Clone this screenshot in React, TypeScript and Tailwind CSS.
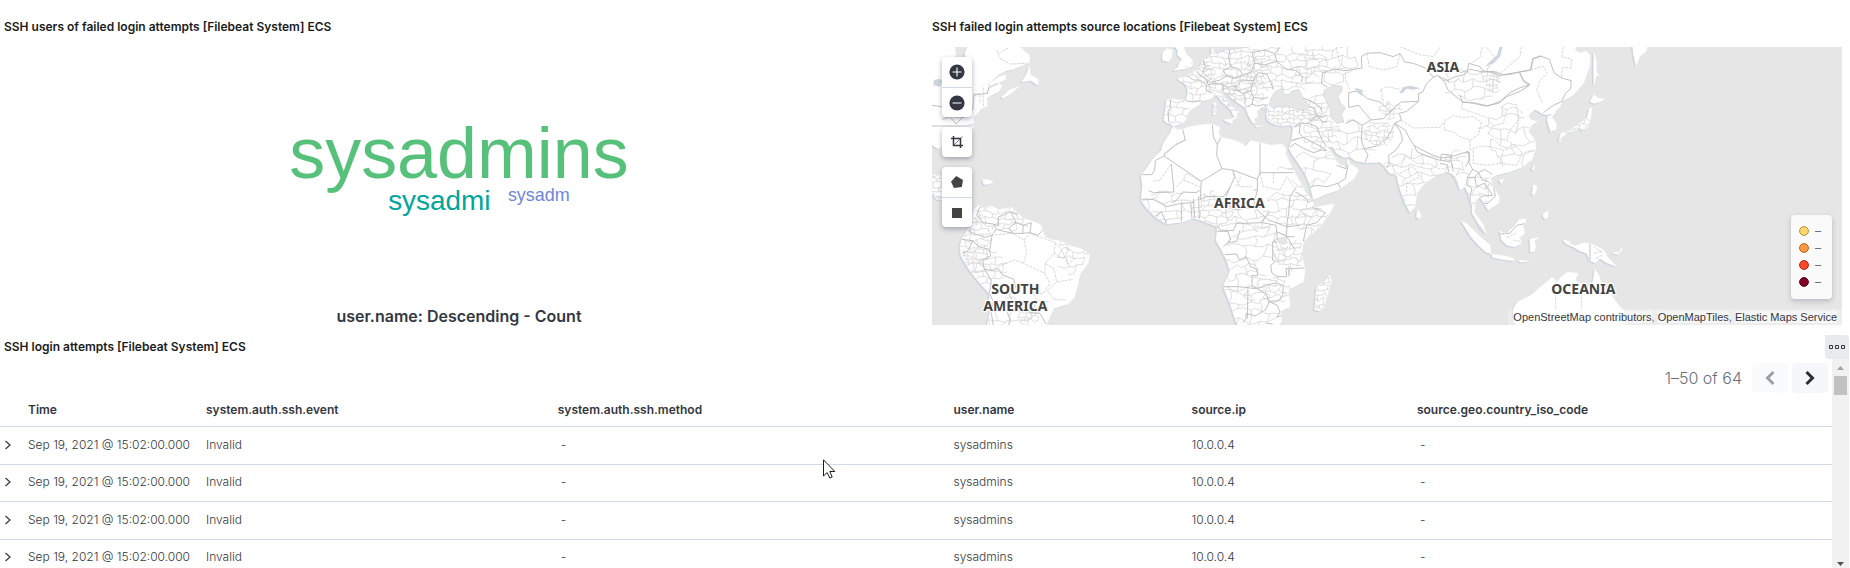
import React from "react";

const rows = [0, 1, 2, 3].map((id) => ({
  id,
  time: "Sep 19, 2021 @ 15:02:00.000",
  event: "Invalid",
  user: "sysadmins",
  ip: "10.0.0.4",
}));

const legend = [
  { fill: "#fed76e", stroke: "#b29231" },
  { fill: "#fd9a42", stroke: "#b0611a" },
  { fill: "#fb4b29", stroke: "#b51a10" },
  { fill: "#800026", stroke: "#4d0014" },
];

/* ---------- map geometry ---------- */

type Shape = { t: string; d: string };

const AMERICAS = "translate(-6 -141)";
const EUROPE = "translate(624 -21)";
const ASIA = "translate(924 -21)";
const PACIFIC = "translate(1584 -21)";
const SOUTH_AFRICA = "translate(624 399)";

const land: Shape[] = [
  // North and Central America
  { t: AMERICAS, d: "M6 141H74L77 165L66 180L100 215L108 171L104 160L112 141H270L286 156L298 166V186L280 196L250 207L225 213L205 224L190 237L176 252L205 232L226 225L228 236L205 250L216 258L206 275L192 281L170 295L172 318L153 328L130 352L130 370L101 375L129 380L128 384L60 392L38 405L34 440L24 446L6 434Z" },
  { t: AMERICAS, d: "M298 201L290 222L275 246L302 241L322 254L326 240L311 230L301 225Z" },
  { t: AMERICAS, d: "M214 292L238 270L266 260L258 268L238 284L219 294Z" },
  { t: AMERICAS, d: "M6 525L40 529V600L20 598L6 580Z" },
  { t: AMERICAS, d: "M158 540L176 539L189 547L178 552L162 553Z" },
  // South America
  { t: AMERICAS, d: "M125 665L130 630L147 616L160 624L183 618L206 629L246 623L262 640L281 656L304 663L331 674L345 712L366 720L390 723L425 738L456 748L478 764L474 790L450 822L441 862L432 893L414 911L371 926L356 958L348 976H172L182 930L178 880L152 852L122 815L94 770L90 744L96 715L112 688Z" },
  // Europe islands
  { t: AMERICAS, d: "M735 141L744 150L743 165L757 178L748 188L744 202L732 212L752 208L770 206L786 198L788 184L780 172L770 165L760 141Z" },
  { t: AMERICAS, d: "M698 158L711 146L727 151L725 171L715 184L698 182Z" },
  { t: EUROPE, d: "M221 190L228 188L227 202L222 204ZM219 207L228 207L227 222L220 224ZM252 240L278 237L276 250L263 248ZM348 258L366 259L350 262Z" },
  // Eurasia
  { t: EUROPE, d: "M214 18L214 44L202 56L188 60L180 79L166 90L153 102L142 104L144 111L132 112L115 115L118 122L132 127L143 145L143 165L137 182L100 178L80 180L77 200L72 240L79 248L90 250L100 258L128 250L138 238L139 225L152 210L180 192L180 183L200 180L215 174L228 165L239 174L245 185L258 195L275 212L282 230L272 243L290 234L289 222L297 215L275 200L258 180L248 167L250 155L262 158L275 175L300 192L318 205L325 225L338 248L345 250L343 235L352 232L350 212L365 205L383 208L380 222L382 240L400 252L430 258L455 255L460 265L455 300L447 325L455 340L475 370L495 400L510 435L520 480L550 466L595 450L640 418L656 390L630 370L624 360L620 375L605 378L590 365L575 340L562 320L578 320L590 340L610 352L630 350L645 362L680 368L720 366L732 378L750 400L770 405L778 440L795 490L810 517L825 500L830 460L850 435L890 405L920 395L935 400L950 420L960 450L975 440L985 460L997 500L997 520L1012 545L1022 565L1038 580L1030 555L1012 530L1002 515L1008 480L1020 472L1032 490L1045 510L1075 490L1078 470L1055 435L1052 415L1070 405L1110 395L1150 380L1175 360L1187 325L1185 300L1165 275L1175 255L1192 245L1170 240L1165 225L1185 208L1198 215L1210 222L1225 225L1222 240L1232 275L1248 268L1248 250L1235 232L1250 210L1260 200L1265 185L1300 165L1330 130L1348 80L1350 45L1338 34L1320 40L1304 31L1310 18Z" },
  // Africa
  { t: EUROPE, d: "M100 258L90 280L70 310L62 335L40 355L20 385L3 405L8 440L3 480L20 505L50 535L82 552L130 545L160 535L180 540L200 548L230 558L232 570L228 600L245 630L262 665L270 695L258 720L250 740L270 790L290 850L300 862H415L425 840L420 815L450 800L447 775L445 750L490 725L495 690L485 640L490 605L540 560L570 520L582 492L550 497L522 503L516 480L495 455L480 425L462 395L450 370L428 325L434 340L440 328L427 313L395 316L360 308L330 302L318 319L300 308L280 300L242 292L235 280L240 262L215 252L180 255L145 262L128 268L110 270Z" },
  { t: SOUTH_AFRICA, d: "M569 285L574 304L562 345L550 382L540 392L524 389L526 360L530 320L550 308Z" },
  { t: ASIA, d: "M532 509L543 524L538 537L530 531Z" },
  // Pacific and South-East Asia
  { t: PACIFIC, d: "M402 40L408 60L410 98L416 106L407 110L402 135L401 80ZM402 164L414 175L434 177L420 186L402 190L390 184ZM395 204L391 238L382 262L366 272L360 262L344 272L324 278L305 292L300 306L296 294L305 278L330 270L352 256L368 244L382 232L388 206ZM518 18H562L558 34L540 48L528 76L522 50Z" },
  { t: PACIFIC, d: "M4 543L22 553L58 588L76 604L90 615L92 640L78 636L52 612L32 588ZM95 643L128 647L160 655L160 662L128 658L98 652ZM175 661L205 664L182 666ZM120 573L137 582L160 562L176 540L196 536L198 546L188 556L194 580L180 592L182 612L164 620L140 615L125 600Z" },
  { t: PACIFIC, d: "M210 598L236 593L222 604L227 620L222 634L212 636ZM310 600L330 605L328 612L346 618L375 608L400 614L430 630L445 655L468 678L440 668L420 655L405 668L390 662L380 640L355 630L340 620L316 610ZM220 436L228 436L230 448L222 466L216 462ZM250 521L264 514L263 532L255 537L248 528ZM216 388L223 374L221 390ZM118 420L131 418L124 431ZM458 640L476 636L484 624L484 632L474 642Z" },
  { t: PACIFIC, d: "M166 860L160 806L172 786L210 768L240 742L276 712L290 726L304 710L322 697L354 700L345 722L372 738L396 742L405 688L418 710L424 732L442 747L472 792L495 815V860Z" },
];

const water: Shape[] = [
  { t: EUROPE, d: "M388 196L392 176L405 155L428 144L432 162L452 164L453 154L476 148L490 176L507 196L503 208L476 210L450 201L420 198L400 204Z" },
  { t: EUROPE, d: "M552 152L578 136L606 138L606 154L594 168L602 190L617 204L604 222L612 246L590 250L574 235L570 208L560 185L550 168Z" },
  { t: EUROPE, d: "M219 20L226 36L242 37L252 30L292 27L325 20ZM363 206L377 198L383 206L370 210Z" },
  { t: SOUTH_AFRICA, d: "M411 176L441 170L437 192L418 190Z" },
];

const lakes: Shape[] = [
  { t: PACIFIC, d: "M128 21L120 50L100 70L75 80L92 62L112 44L118 21Z" },
  { t: ASIA, d: "M478 158L490 141L512 137L541 145L520 149L500 146L488 160Z" },
  { t: ASIA, d: "M345 143L368 150L366 168L350 156Z" },
  { t: SOUTH_AFRICA, d: "M399 205L408 232L420 252L412 246L401 225ZM444 254L450 268L449 293L444 286Z" },
  { t: AMERICAS, d: "M12 240L30 236L36 244L30 260L10 256Z" },
];

const borders: Shape[] = [
  { t: AMERICAS, d: "M6 378H128M37 358L60 350L102 352L128 330L132 285L172 280L178 262L204 250M6 316L36 320M60 350L78 372L100 350" },
  { t: AMERICAS, d: "M150 620L140 645L160 668L190 672L200 688L186 706L166 712L130 700L112 690M190 672L206 678L204 652L240 636L262 644M244 640L258 668L236 684L250 700L204 690M258 668L280 676L278 700L250 700M280 676L304 668L300 698L278 700M300 698L324 706L338 690M96 718L128 722L146 740L178 748L182 768L158 780L162 806L186 812L206 806L216 824L252 838L256 862L238 886L252 908L284 916L300 938L330 940L348 972M178 880L190 904L184 940L190 975M252 908L230 930L240 960L236 975M162 806L184 840L178 880M128 722L114 752L98 760M186 706L180 748" },
  { t: EUROPE, d: "M137 182L160 186L180 182M92 180L90 205L84 215L86 245M143 108L160 120L180 120M180 120L200 135L198 150L215 160M166 92L178 104L200 118L204 134M190 60L196 80L188 96L204 112M270 22L266 50L272 80L250 92L260 108L240 120L212 128M272 80L296 86L308 104L284 114L260 108M308 104L332 98L344 70L336 38M204 134L230 130L248 134L262 142L288 138L308 120L340 122L354 98L380 102L392 126L400 150M248 134L250 155M288 138L292 152L310 160L318 180L312 190M310 160L332 152L340 122M332 152L340 172L370 176L384 172M340 172L336 192L324 200M336 192L352 198L370 194L384 196M280 150L302 152M344 70L376 74L410 64L440 88L470 92L488 110L484 128M410 64L404 40L420 22M336 38L372 30L404 40" },
  { t: EUROPE, d: "M462 262L480 250L504 250L530 226L524 206L506 200M480 250L478 280L490 292L458 300M490 292L520 308L548 322L560 332M504 250L530 260L546 300L560 320M530 226L548 232L560 226M478 170L506 180L540 200L546 216M530 226L548 246L560 244M452 304L470 296M450 322L465 310L490 325L520 338L545 330L560 332M512 440L530 436L560 440L594 430L616 416L624 378M594 430L602 446M590 376L618 386L620 362" },
  { t: ASIA, d: "M248 98L284 88L320 92L366 84L364 50L380 40L420 38L460 50L480 40L494 66L520 70L556 84L580 112L560 130L548 156L536 160L536 184L500 214L478 220L484 240L464 250M248 98L244 130L262 142M326 202V158L354 152L382 176L420 186L450 214L484 186L534 184M326 202L356 196L378 222L392 240M316 250L340 240L366 256L392 240L430 236L460 208M366 256L364 300L372 326L384 344L376 366M372 326L410 318L440 296L456 268L464 250L496 270L510 298L522 316L546 330L580 346L604 354L634 350M464 250L480 272L488 300L468 330L446 346L448 372L440 384M522 316L532 336L570 352L604 362M604 342L636 346L630 366L602 360ZM634 350L660 342L684 334L690 360L676 380M600 370L622 374L626 396M634 366L640 394M580 112L592 106L614 126L624 150L668 186L700 190L736 198L776 190L800 170L840 154L868 136L850 124L838 96L790 104L760 94L730 96L690 88L672 104L640 112L624 122L594 108M838 96L872 90L880 56L906 48" },
  { t: PACIFIC, d: "M0 98L22 92L26 70L60 80L68 92L100 98L120 106L158 102L178 96L190 120L210 134L178 144L150 158L120 184L84 198L40 188L8 186L0 166M178 96L212 90L218 56L240 48L268 58L282 98L304 114L334 122L332 146L316 160L306 184L280 196L250 218M258 228L272 224M16 340L28 336L26 366L38 388L22 412L20 432L36 446L30 470L34 510M38 388L56 398L74 388L98 404M22 412L44 412L56 398L66 420L84 424L100 440L106 468L84 490L64 492M44 412L50 440L72 430L92 456L98 466L66 468L58 480M120 582L150 580L170 556L198 550M390 612V664M48 545L60 560L72 576" },
  { t: EUROPE, d: "M128 268L136 300L110 312L74 340L72 348L184 424L246 386L278 390L352 418V450H340M72 348L46 362L44 390L36 404H4M94 372L102 456L40 458L26 452M217 254L220 290L232 314L230 346L246 386M242 292L232 314M360 308V398M360 398H460M352 418L360 398M184 424L182 450L168 458L128 456L112 478L96 490M182 450L182 478L196 470L250 470L270 442L284 410L278 390M270 442L258 470L270 500L290 510L340 500L352 450M340 500L386 540L440 560L480 556M470 440L450 470L446 520L440 556M466 456L492 470L508 488M516 500L556 518L530 548L500 556L490 604M4 480L40 478L62 490L80 500L98 496L124 490L160 488M124 490V544M152 490L156 536M160 476L164 534M176 470L178 536M44 530L64 516L80 550" },
  { t: SOUTH_AFRICA, d: "M230 136L240 150L280 152L290 130L312 130L366 128L408 136L412 176L398 186L398 240L404 246L392 256L396 280L414 290L440 290L438 266L494 264M232 154H264L272 180L250 200M264 188L290 184L300 150M254 224L290 222L298 240L318 230L332 260L352 268V288L336 286V318L352 326L384 314L412 308L430 320L428 346L418 362L388 364L378 388L346 408L318 400V416L308 428M248 320L296 320L348 326M324 330L322 416M366 128L386 96M412 156L440 168L464 208M386 364L412 376L420 396L410 412L428 406M378 430L398 432M352 326L378 342L388 364M398 186H412M442 134L438 170L464 170" },
];

const faint: Shape[] = [
  { t: AMERICAS, d: "M200 150L210 175L240 192L290 190M205 160L236 144M130 283L150 281V310M160 262V320M178 250L172 282M182 706L246 700L282 720L290 760L280 790L252 780L182 810M282 720L300 700L350 718L376 728L372 760L346 790L344 820L280 790M372 760L400 776L420 740M376 728L396 752L414 792L440 772M346 790L372 806L380 846L430 838M380 846L352 872L372 898L410 900M344 820L360 850L340 880L316 880L300 860L256 862M300 860L320 902L360 906" },
  { t: EUROPE, d: "M136 300L100 320L74 346M182 424L140 400L130 420L180 440M94 372L60 420L40 424M280 400L300 440L340 440M360 398L370 440L420 450L440 410L460 440M400 398V430M302 410L290 440M110 440L130 420" },
  { t: ASIA, d: "M614 242L640 226L664 232L700 230L724 246L716 284L690 300L660 290L640 276L612 270ZM668 186L664 206L700 218L740 232L760 258L744 280M690 300V330L720 318L750 320L790 330M744 280L770 296L800 300L830 320M760 258L790 250L800 210L820 200L850 220M800 210L780 200M830 200L836 240L810 270L800 300M484 240L520 264L600 262L612 244M700 330V370L740 376L780 370L830 376L846 340L880 330M780 370L790 330L830 320L846 340M420 380L470 376L500 350L530 370L570 372L600 388M480 400L520 380L540 410L500 430L500 460M740 22L770 60L740 88M288 22L300 70L318 86L316 120L330 150M380 40L388 80L430 90L470 80L480 42M480 20L540 44L580 50L600 22M420 150L440 140L480 148M424 150L430 190" },
  { t: PACIFIC, d: "M66 21L60 52L34 70M184 21L180 50L120 100M310 21L305 50L336 58L332 84L308 82L304 112M212 90L250 78L262 100L240 122L230 150L248 190M364 758V810M287 725V810M140 592L168 580M160 600L180 604M400 620L430 640M402 640L428 632M408 655L426 646" },
];

/* Deterministic pseudo-random generator for the district mesh. */
function rng(seed: number) {
  let s = seed;
  return () => {
    s = (s * 1664525 + 1013904223) % 4294967296;
    return s / 4294967296;
  };
}

/* Jittered honeycomb covering an ellipse: district lines of one area. */
function mesh(cx: number, cy: number, rx: number, ry: number, step: number, seed: number) {
  const rand = rng(seed);
  const cols = Math.ceil((rx * 2) / step) + 2;
  const lines = Math.ceil((ry * 2) / step) + 2;
  const pts: { x: number; y: number }[][] = [];
  for (let r = 0; r < lines; r++) {
    pts.push([]);
    for (let c = 0; c < cols; c++) {
      pts[r].push({
        x: cx - rx + c * step + (rand() - 0.5) * step * 0.75,
        y: cy - ry + r * step + (rand() - 0.5) * step * 0.75,
      });
    }
  }
  const inside = (p: { x: number; y: number }) => ((p.x - cx) / rx) ** 2 + ((p.y - cy) / ry) ** 2 < 1;
  let d = "";
  const link = (a: { x: number; y: number }, b: { x: number; y: number }) => {
    if (!inside(a) || !inside(b)) return;
    const mx = (a.x + b.x) / 2 + (rand() - 0.5) * step * 0.5;
    const my = (a.y + b.y) / 2 + (rand() - 0.5) * step * 0.5;
    d += `M${a.x.toFixed(0)} ${a.y.toFixed(0)}L${mx.toFixed(0)} ${my.toFixed(0)}L${b.x.toFixed(0)} ${b.y.toFixed(0)}`;
  };
  for (let r = 0; r < lines; r++) {
    for (let c = 0; c < cols; c++) {
      if (c + 1 < cols) link(pts[r][c], pts[r][c + 1]);
      if (r + 1 < lines && (r + c) % 2 === 0) link(pts[r][c], pts[r + 1][c]);
    }
  }
  return d;
}

const districts = [
  // Europe
  mesh(800, 100, 60, 70, 18, 3),
  mesh(730, 190, 55, 45, 20, 5),
  mesh(900, 60, 120, 85, 19, 7),
  mesh(930, 130, 80, 60, 18, 11),
  mesh(1060, 60, 130, 80, 21, 13),
  mesh(1180, 50, 110, 70, 26, 17),
  mesh(880, 180, 50, 50, 16, 19),
  // Turkey, Caucasus, Middle East
  mesh(1070, 206, 80, 38, 12, 23),
  mesh(1150, 180, 50, 50, 17, 29),
  mesh(1165, 250, 60, 60, 16, 31),
  mesh(1250, 290, 90, 70, 30, 37),
  mesh(1130, 380, 100, 90, 40, 41),
  mesh(1340, 260, 50, 45, 13, 43),
  mesh(1375, 190, 40, 28, 13, 47),
  // South, East and South-East Asia
  mesh(1440, 390, 110, 90, 28, 53),
  mesh(1570, 360, 45, 50, 18, 59),
  mesh(1620, 110, 100, 60, 26, 61),
  mesh(1680, 100, 30, 35, 12, 67),
  mesh(1740, 270, 110, 100, 38, 71),
  mesh(1640, 430, 60, 60, 24, 73),
  mesh(1930, 250, 60, 60, 14, 79),
  // Africa
  mesh(700, 480, 100, 70, 26, 83),
  mesh(840, 490, 70, 60, 16, 89),
  mesh(940, 520, 80, 50, 22, 97),
  mesh(1080, 480, 90, 60, 22, 101),
  mesh(1150, 520, 60, 60, 22, 103),
  mesh(980, 610, 120, 80, 36, 107),
  mesh(1075, 625, 50, 50, 16, 109),
  mesh(940, 700, 90, 70, 32, 113),
  mesh(1030, 730, 50, 45, 16, 127),
  mesh(930, 790, 120, 80, 28, 131),
  mesh(1172, 740, 40, 80, 14, 137),
  // Americas
  mesh(210, 510, 100, 50, 18, 139),
  mesh(130, 590, 50, 100, 18, 149),
  mesh(150, 660, 80, 70, 20, 151),
  mesh(290, 800, 40, 40, 12, 157),
  mesh(230, 800, 90, 60, 26, 163),
  mesh(420, 620, 60, 80, 24, 167),
  mesh(20, 420, 40, 60, 12, 173),
].join("");

const shapes = (list: Shape[]) => list.map((s, i) => <path key={i} transform={s.t} d={s.d} />);

function WorldMap() {
  return (
    <svg
      viewBox="0 0 2730 834"
      preserveAspectRatio="xMinYMin slice"
      className="block h-full w-full bg-[#e6e6e6]"
      role="img"
      aria-label="World map"
    >
      <defs>
        <clipPath id="land">{shapes(land)}</clipPath>
      </defs>
      <g fill="#cdd5df" stroke="#cdd5df" strokeWidth="3" transform="translate(-4 3)">
        {shapes(land)}
      </g>
      <g fill="#ffffff" stroke="#ffffff" strokeWidth="2" strokeLinejoin="round">
        {shapes(land)}
      </g>
      <g fill="none" strokeLinejoin="round" clipPath="url(#land)">
        <path d={districts} stroke="#d2d2d2" strokeWidth="2.2" />
        <g stroke="#cecece" strokeWidth="2.4" strokeDasharray="9 3">
          {shapes(faint)}
        </g>
        <g stroke="#bcbcbc" strokeWidth="2.8">{shapes(borders)}</g>
      </g>
      <g fill="#e6e6e6" stroke="#cdd5df" strokeWidth="2">
        {shapes(water)}
      </g>
      <g fill="#cdd5df">{shapes(lakes)}</g>
      <g
        className="font-['Noto_Sans',sans-serif] text-[42px] font-bold"
        fill="#444444"
        stroke="#ffffff"
        strokeWidth="7"
        strokeLinejoin="round"
        paintOrder="stroke"
        textAnchor="middle"
      >
        <text x="250" y="741">SOUTH</text>
        <text x="250" y="791">AMERICA</text>
        <text x="922" y="483">AFRICA</text>
        <text x="1533" y="75">ASIA</text>
        <text x="1954" y="741">OCEANIA</text>
      </g>
    </svg>
  );
}

function MapControls() {
  const group = "flex flex-col overflow-hidden rounded bg-white shadow-[0_2px_5px_rgba(70,80,100,0.45)]";
  const button = "flex h-[30px] w-[30px] items-center justify-center";
  return (
    <div className="absolute left-[10px] top-[10px] flex flex-col gap-[10px]">
      <div className={group}>
        <button aria-label="Zoom in" className={button}>
          <svg width="16" height="16" viewBox="0 0 16 16">
            <circle cx="8" cy="8" r="7.6" fill="#343741" />
            <path d="M8 3.5v9M3.5 8h9" stroke="#fff" strokeWidth="1.1" />
          </svg>
        </button>
        <button aria-label="Zoom out" className={button + " border-t border-[#d3dae6]"}>
          <svg width="16" height="16" viewBox="0 0 16 16">
            <circle cx="8" cy="8" r="7.6" fill="#343741" />
            <path d="M3.5 8h9" stroke="#fff" strokeWidth="1.1" />
          </svg>
        </button>
      </div>
      <div className={group}>
        <button aria-label="Fit to data bounds" className={button}>
          <svg width="12" height="12" viewBox="0 0 12 12" fill="none" stroke="#343741">
            <path d="M2.500 0v9.500h9.500M0 2.500h9.500v9.500" strokeWidth="1.5" />
            <path d="M3.5 8.5l8-8" strokeWidth="0.6" />
          </svg>
        </button>
      </div>
      <div className={group}>
        <button aria-label="Draw polygon" className={button}>
          <svg width="12" height="12" viewBox="0 0 12 12" fill="#444">
            <path d="M5.200 0L12 4L10.800 11L3 12L0 5.800Z" />
          </svg>
        </button>
        <button aria-label="Draw rectangle" className={button + " border-t border-[#d3dae6]"}>
          <svg width="10" height="10">
            <rect width="10" height="10" fill="#444" />
          </svg>
        </button>
      </div>
    </div>
  );
}

function WordCloud() {
  return (
    <svg
      viewBox="0 0 920 255"
      className="block h-[255px] w-full font-['Liberation_Sans',Arial,sans-serif]"
      role="img"
      aria-label="user.name tag cloud"
    >
      <text x="290" y="131" fontSize="72" fill="#57c17b">sysadmins</text>
      <text x="389" y="163" fontSize="28" fill="#00a69b">sysadmi</text>
      <text x="509" y="154" fontSize="18" fill="#6f87d8">sysadm</text>
    </svg>
  );
}

const titleClass = "text-[12px] leading-[18px] font-semibold text-[#1a1c21]";

export default function App() {
  return (
    <main className="relative flex h-screen flex-col overflow-hidden bg-white font-['Inter',sans-serif] text-[#343741]">
      <div className="grid grid-cols-2 gap-[14px]">
        <section className="pt-[18px]">
          <h2 className={titleClass + " pl-1"}>SSH users of failed login attempts [Filebeat System] ECS</h2>
          <div className="pt-[11px]">
            <WordCloud />
            <p className="pt-[2px] text-center text-[16px] leading-[24px] font-semibold">user.name: Descending - Count</p>
          </div>
        </section>
        <section className="pt-[18px] pr-2">
          <h2 className={titleClass}>SSH failed login attempts source locations [Filebeat System] ECS</h2>
          <div className="relative mt-[11px] h-[278px] overflow-hidden">
            <WorldMap />
            <MapControls />
            <ul className="absolute bottom-[26px] right-[10px] flex flex-col rounded bg-[#fafafb] px-2 pt-[7px] pb-[9px] shadow-[0_2px_5px_rgba(70,80,100,0.3)]">
              {legend.map((l) => (
                <li key={l.fill} className="flex h-[17px] items-center gap-[6px] pr-[3px] text-[12px] text-[#69707d]">
                  <svg width="10" height="10" viewBox="0 0 10 10">
                    <circle cx="5" cy="5" r="4.4" fill={l.fill} stroke={l.stroke} />
                  </svg>
                  –
                </li>
              ))}
            </ul>
            <div className="absolute bottom-0 right-0 bg-white/30 px-[5px] font-['Liberation_Sans',Arial,sans-serif] text-[11px] leading-[16px] text-[#69707d]">
              <a href="#osm" className="bg-white/50 text-[#343741]">OpenStreetMap contributors</a>,{" "}
              <a href="#omt" className="bg-white/50 text-[#343741]">OpenMapTiles</a>,{" "}
              <a href="#ems" className="bg-white/50 text-[#343741]">Elastic Maps Service</a>
            </div>
          </div>
        </section>
      </div>

      <section className="flex min-h-0 flex-1 flex-col pt-[7px]">
        <header className="flex h-6 shrink-0 items-center justify-between pr-px pl-1">
          <h2 className={titleClass}>SSH login attempts [Filebeat System] ECS</h2>
          <button aria-label="Panel options" className="flex h-6 w-6 items-center justify-center rounded-tr rounded-bl bg-[#e9eaed]">
            <svg width="16" height="4" viewBox="0 0 16 4" fill="none" stroke="#343741">
              <path d="M.5.5h3v3h-3zM6.5.5h3v3h-3zM12.5.5h3v3h-3z" />
            </svg>
          </button>
        </header>
        <div className="flex min-h-0 flex-1 pr-px">
          <div className="min-w-0 flex-1 overflow-hidden">
            <div className="flex items-center justify-end gap-1 pt-1 pr-1">
              <span className="pr-[6px] text-[16px] leading-[24px] font-light text-[#69707d]">1–50 of 64</span>
              <button disabled aria-label="Previous page" className="flex h-[30px] w-9 items-center justify-center rounded bg-[#fafbfd] text-[#98a0ab]">
                <svg width="12" height="16" viewBox="0 0 12 16" fill="none" stroke="currentColor" strokeWidth="3">
                  <path d="M9.500 2L3.500 8l6 6" />
                </svg>
              </button>
              <button aria-label="Next page" className="flex h-[30px] w-9 items-center justify-center rounded bg-[#f5f7fa] text-[#2b2d36]">
                <svg width="12" height="16" viewBox="0 0 12 16" fill="none" stroke="currentColor" strokeWidth="3">
                  <path d="M2.500 2l6 6l-6 6" />
                </svg>
              </button>
            </div>
            <table className="w-full table-fixed border-separate border-spacing-0 text-left text-[12px] leading-[18px] [&_td]:border-b [&_td]:border-[#d3dae6] [&_td]:pb-[2px] [&_th]:border-b [&_th]:border-[#d3dae6]">
              <colgroup>
                <col className="w-6" />
                <col className="w-[178px]" />
                <col className="w-[19.2%]" />
                <col className="w-[21.6%]" />
                <col className="w-[13%]" />
                <col className="w-[12.3%]" />
                <col />
              </colgroup>
              <thead>
                <tr className="h-[34px]">
                  <th aria-label="Expand" />
                  <th className="px-1 font-semibold">Time</th>
                  <th className="px-1 font-semibold">system.auth.ssh.event</th>
                  <th className="px-1 font-semibold">system.auth.ssh.method</th>
                  <th className="px-1 font-semibold">user.name</th>
                  <th className="px-1 font-semibold">source.ip</th>
                  <th className="px-1 font-semibold">source.geo.country_iso_code</th>
                </tr>
              </thead>
              <tbody>
                {rows.map((r) => (
                  <tr key={r.id} className="font-light odd:h-[38px] even:h-[37px]">
                    <td className="pl-1 align-middle">
                      <button aria-label="Toggle row details" className="flex h-4 w-2 items-center">
                        <svg width="8" height="10" viewBox="0 0 8 10" fill="none" stroke="#343741" strokeWidth="1.200">
                          <path d="M1.500 1L6 5L1.500 9" />
                        </svg>
                      </button>
                    </td>
                    <td className="px-1 whitespace-nowrap">{r.time}</td>
                    <td className="px-1">{r.event}</td>
                    <td className="px-[7px]">-</td>
                    <td className="px-1">{r.user}</td>
                    <td className="px-1">{r.ip}</td>
                    <td className="px-[7px]">-</td>
                  </tr>
                ))}
              </tbody>
            </table>
          </div>
          <div aria-hidden="true" className="flex w-[17px] flex-col items-center bg-[#f1f1f1]">
            <svg width="17" height="17" viewBox="0 0 17 17">
              <path d="M5 11L8.500 7L12 11Z" fill="#a3a3a3" />
            </svg>
            <div className="h-[19px] w-[13px] bg-[#c1c1c1]" />
            <svg width="17" height="10" viewBox="0 0 17 10" className="mt-auto">
              <path d="M5 4L8.500 8L12 4Z" fill="#505050" />
            </svg>
          </div>
        </div>
      </section>

      <svg className="absolute left-[823px] top-[459px]" width="13" height="20" viewBox="0 0 13 20" aria-hidden="true">
        <path d="M.5.8V17L4.200 13.600L6.800 19L9.200 18L6.800 12.500H11.800Z" fill="#fff" stroke="#1a1c2b" />
      </svg>
    </main>
  );
}
